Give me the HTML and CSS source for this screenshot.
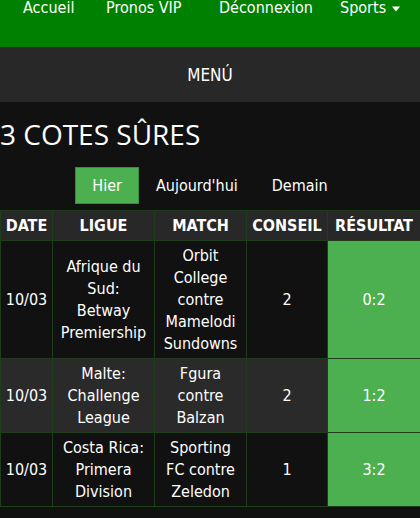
FILE: index.html
```html
<!DOCTYPE html>
<html lang="fr">
<head>
<meta charset="utf-8">
<title>3 Cotes Sûres</title>
<link rel="stylesheet" href="styles.css">
</head>
<body>
<nav class="topnav">
  <a class="nav-item nav-accueil" href="#">Accueil</a>
  <a class="nav-item nav-vip" href="#">Pronos VIP</a>
  <a class="nav-item nav-logout" href="#">Déconnexion</a>
  <a class="nav-item nav-sports" href="#">Sports<svg class="caret" width="8" height="6" viewBox="0 0 8 6"><path d="M0 0.5H8L4 5.5Z" fill="#fff"/></svg></a>
</nav>
<div class="menubar">MENÚ</div>
<h1 class="title">3 COTES SÛRES</h1>
<div class="tabs">
  <a class="tab tab-active" href="#">Hier</a>
  <a class="tab" href="#">Aujourd'hui</a>
  <a class="tab" href="#">Demain</a>
</div>
<table class="tips">
  <colgroup>
    <col class="c-date"><col class="c-ligue"><col class="c-match"><col class="c-conseil"><col class="c-res">
  </colgroup>
  <thead>
    <tr><th>DATE</th><th>LIGUE</th><th>MATCH</th><th>CONSEIL</th><th>RÉSULTAT</th></tr>
  </thead>
  <tbody>
    <tr class="odd">
      <td>10/03</td><td class="wide">Afrique du Sud: Betway Premiership</td><td class="wide">Orbit College contre Mamelodi Sundowns</td><td>2</td><td class="res">0:2</td>
    </tr>
    <tr class="even">
      <td>10/03</td><td class="wide">Malte: Challenge League</td><td class="wide">Fgura contre Balzan</td><td>2</td><td class="res">1:2</td>
    </tr>
    <tr class="odd">
      <td>10/03</td><td class="wide">Costa Rica: Primera Division</td><td class="wide">Sporting FC contre Zeledon</td><td>1</td><td class="res">3:2</td>
    </tr>
  </tbody>
</table>
</body>
</html>
```
FILE: styles.css
```css
* { box-sizing: border-box; }
html, body { margin: 0; padding: 0; }
body {
  background: #111111;
  color: #ffffff;
  font-family: "DejaVu Sans Condensed", "DejaVu Sans", sans-serif;
  font-stretch: condensed;
  font-size: 16px;
  width: 420px;
}
a { color: #ffffff; text-decoration: none; }

.topnav {
  background: #008000;
  height: 47px;
  display: flex;
  align-items: flex-start;
  padding: 0 0 0 23px;
}
.nav-item {
  font-size: 16px;
  line-height: 16px;
  white-space: nowrap;
  display: flex;
  align-items: center;
}
.nav-accueil { width: 83px; }
.nav-vip { width: 113px; }
.nav-logout { width: 121px; }
.nav-sports { gap: 6px; }
.caret { display: block; margin-top: 1px; }

.menubar {
  background: #282828;
  height: 55px;
  display: flex;
  align-items: center;
  justify-content: center;
  font-size: 17px;
}

.title {
  font-family: "Open Sans", sans-serif;
  font-stretch: normal;
  font-weight: 400;
  font-size: 28px;
  line-height: 38px;
  margin: 13px 0 0 0;
}

.tabs {
  display: flex;
  justify-content: center;
  margin-top: 14px;
  height: 37px;
}
.tab {
  padding: 0 16px;
  line-height: 35px;
  border: 1px solid transparent;
}
.tab-active {
  background: #4caf50;
  border-color: #3d8b40;
}

.tips {
  margin-top: 6px;
  width: 420px;
  border-collapse: collapse;
  table-layout: fixed;
}
.c-date { width: 52px; }
.c-ligue { width: 102px; }
.c-match { width: 92px; }
.c-conseil { width: 81px; }
.c-res { width: 93px; }

.tips th, .tips td {
  border: 1px solid #1f3d1c;
  text-align: center;
  vertical-align: middle;
  line-height: 22px;
  padding: 4px 2px 3px;
}
.tips th {
  background: #282828;
  font-weight: 700;
}
.tips td.wide { padding-left: 6px; padding-right: 6px; }
.tips tr.odd td { background: #111111; }
.tips tr.even td { background: #2a2a2a; }
.tips tr td.res { background: #4caf50; }
```
